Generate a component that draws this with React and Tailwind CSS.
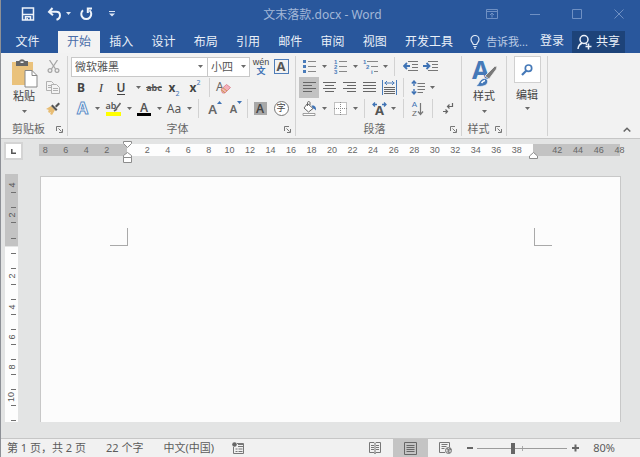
import { useState } from 'react';

const tabs = ['开始', '插入', '设计', '布局', '引用', '邮件', '审阅', '视图', '开发工具'];

function Caret() {
  return (
    <svg className="w-[5px] h-[3px] shrink-0" viewBox="0 0 5 3">
      <path d="M0 0h5L2.5 3z" fill="#6a6a6a" />
    </svg>
  );
}

function Tool({ label, className = 'w-5', children }) {
  return (
    <button aria-label={label} className={`h-full shrink-0 flex items-center justify-center hover:bg-[#d5d5d5] ${className}`}>
      {children}
    </button>
  );
}

function More({ label, className = 'w-2' }) {
  return (
    <Tool label={`${label}选项`} className={className}>
      <Caret />
    </Tool>
  );
}

function Divider({ className = 'mx-1' }) {
  return <div className={`w-px h-[19px] shrink-0 bg-[#d2d2d2] ${className}`}></div>;
}

function Row({ children }) {
  return <div className="h-[21px] flex items-center">{children}</div>;
}

function Group({ title, launcher = true, className = '', children }) {
  return (
    <section className={`shrink-0 flex flex-col border-r border-[#d2d2d2] ${className}`}>
      <div className="h-[66px]">{children}</div>
      <div className="h-[14px] flex items-center">
        <span className="flex-1 text-center text-[#666]">{title}</span>
        {launcher && title && (
          <button aria-label={`${title}设置`} className="mr-1 w-[7px]">
            <svg className="w-[7px] h-[7px]" viewBox="0 0 7 7" fill="none" stroke="#777">
              <path d="M.5 5V.5H5M2.5 2.5l3 3M6.5 3v3.5H3" />
            </svg>
          </button>
        )}
      </div>
    </section>
  );
}

// paragraph lines, each entry is [x, width]
function Lines({ rows }) {
  return (
    <svg className="w-[13px] h-[11px]" viewBox="0 0 13 11">
      {rows.map(([x, w], i) => (
        <rect key={i} x={x} y={i * 3} width={w} height="1" fill="#666" />
      ))}
    </svg>
  );
}

function TitleBar() {
  return (
    <header className="h-[31px] flex items-center px-4 pb-1">
      <div className="flex-1 flex items-center pl-1">
        <button aria-label="保存">
          <svg className="w-[14px] h-[14px]" viewBox="0 0 14 14" fill="none" stroke="#eef3fa" strokeWidth="1.5">
            <path d="M1.5 1h11v12h-11zM2 7.5h10" />
            <path d="M4.5 13V9.8h5V13" />
            <path d="M6.2 11v2" />
          </svg>
        </button>
        <button aria-label="撤消" className="ml-3">
          <svg className="w-[15px] h-[14px]" viewBox="0 0 15 14" fill="none" stroke="#eef3fa" strokeWidth="2">
            <path d="M5.5 1L2 4.8l4 3.4M2.5 4.8h6.7c5 0 5 6.5.3 8" />
          </svg>
        </button>
        <button aria-label="撤消列表" className="ml-1">
          <svg className="w-[5px] h-[3px]" viewBox="0 0 5 3">
            <path d="M0 0h5L2.5 3z" fill="#dbe5f3" />
          </svg>
        </button>
        <button aria-label="重复" className="ml-2">
          <svg className="w-[14px] h-[14px]" viewBox="0 0 14 14" fill="none" stroke="#eef3fa" strokeWidth="2">
            <path d="M4 3.2A5 5 0 1 0 10.5 3.2M13 1.5H8.8V6" />
          </svg>
        </button>
        <button aria-label="自定义快速访问工具栏" className="ml-4">
          <svg className="w-[6px] h-[7px]" viewBox="0 0 6 7" fill="#dbe5f3">
            <path d="M0 1h6v1H0zM0 3.5h6L3 6.5z" />
          </svg>
        </button>
      </div>
      <h1 className="self-end text-[12px] leading-6 text-[#a3b8d8]">文末落款.docx - Word</h1>
      <div className="flex-1 flex items-center justify-end gap-8 text-[#6f90c3]">
        <button aria-label="功能区显示选项">
          <svg className="w-3 h-[10px]" viewBox="0 0 12 10" fill="none" stroke="currentColor">
            <path d="M.5.5h11v9H.5zM.5 2.5h11M6 8.5V4M4 6l2-2 2 2" />
          </svg>
        </button>
        <button aria-label="最小化">
          <svg className="w-[10px] h-[10px]" viewBox="0 0 10 10" stroke="currentColor">
            <path d="M0 5.5h10" />
          </svg>
        </button>
        <button aria-label="最大化">
          <svg className="w-[10px] h-[10px]" viewBox="0 0 10 10" fill="none" stroke="currentColor">
            <path d="M.5.5h9v9h-9z" />
          </svg>
        </button>
        <button aria-label="关闭">
          <svg className="w-[10px] h-[10px]" viewBox="0 0 10 10" stroke="currentColor">
            <path d="M.5.5l9 9M9.5.5l-9 9" />
          </svg>
        </button>
      </div>
    </header>
  );
}

function TabBar() {
  const [active, setActive] = useState('开始');

  return (
    <nav className="h-[22px] flex text-[12px] leading-[20px] whitespace-nowrap text-[#eaf0f8]">
      <button className="w-[57px] shrink-0 pr-1">文件</button>
      <div className="flex-1 flex justify-between">
        {tabs.map((tab) => (
          <button
            key={tab}
            onClick={() => setActive(tab)}
            className={`px-[9px] ${active === tab ? 'bg-[#f3f3f3] text-[#4a6ea9]' : ''}`}
          >
            {tab}
          </button>
        ))}
      </div>
      <button className="shrink-0 ml-2 flex items-center gap-[6px] text-[11px] text-[#b9cae3]">
        <svg className="w-[10px] h-[14px]" viewBox="0 0 10 14" fill="none" stroke="#dfe8f4">
          <path d="M3.3 9.5C3.3 7.8 1 7 1 4.5a4 4 0 0 1 8 0C9 7 6.7 7.8 6.7 9.5zM3.3 11.5h3.4M4 13.2h2" strokeWidth="1.2" />
        </svg>
        告诉我...
      </button>
      <a href="#login" className="shrink-0 ml-3">登录</a>
      <button className="shrink-0 ml-2 mr-[15px] px-[5px] flex items-center gap-1 bg-[#1d4379]">
        <svg className="w-[15px] h-4" viewBox="0 0 15 16" fill="none" stroke="#eef3fa" strokeWidth="1.5">
          <circle cx="7" cy="5.5" r="4" />
          <path d="M1 15c.3-3.5 2-5 4.3-6M8.5 9.3l1.5 1.5M11.5 9.5v6M8.5 12.5h6" />
        </svg>
        共享
      </button>
    </nav>
  );
}

function ClipboardGroup() {
  return (
    <Group title="剪贴板" className="w-[67px]">
      <div className="flex">
        <button className="ml-[9px] w-[28px] flex flex-col items-center text-[#444]">
          <svg className="w-[27px] h-[29px] mt-[3px]" viewBox="0 0 27 29">
            <path d="M1 3h21v23H1z" fill="#eac27c" />
            <path d="M5 2h3a3.4 3.4 0 0 1 6 0h3v5H5z" fill="#666" />
            <path d="M9.5 2.5h3V4h-3z" fill="#f1f1f1" />
            <path d="M14 11.5h7l5 5V28H14z" fill="#fff" stroke="#888" />
            <path d="M21 11.5v5h5" fill="none" stroke="#888" />
          </svg>
          <span className="leading-[16px]">粘贴</span>
          <span className="mt-1 h-[7px] flex items-center"><Caret /></span>
        </button>
        <div className="ml-[5px] flex flex-col">
          <Row>
            <Tool label="剪切">
              <svg className="w-[13px] h-[13px]" viewBox="0 0 13 13" fill="none" stroke="#a6a6a6" strokeWidth="1.3">
                <path d="M2.5 0l6 9M10.5 0l-6 9" />
                <circle cx="3" cy="10.5" r="1.9" />
                <circle cx="10" cy="10.5" r="1.9" />
              </svg>
            </Tool>
          </Row>
          <Row>
            <Tool label="复制">
              <svg className="w-[14px] h-[13px]" viewBox="0 0 14 13" fill="#f3f3f3" stroke="#b0b0b0">
                <path d="M.5.5h5l2 2v7h-7zM2 4.5h4M2 6.5h4" />
                <path d="M5.5 3.5h5l3 3v6h-8zM7 7.5h5M7 9.5h5" />
              </svg>
            </Tool>
          </Row>
          <Row>
            <Tool label="格式刷">
              <svg className="w-[14px] h-[13px]" viewBox="0 0 14 13">
                <path d="M0 7l5-3 4 4-3 5-2-1 1-2-2 1-1-2 1-1z" fill="#e8bd74" />
                <path d="M5 4l1.5-1.5 5 5L10 9z" fill="#555" />
                <path d="M9 4l3.5-3.5L14 2l-3.5 3.5z" fill="#555" />
              </svg>
            </Tool>
          </Row>
        </div>
      </div>
    </Group>
  );
}

function FontGroup() {
  return (
    <Group title="字体" className="w-[228px] pl-[3px]">
      <Row>
        <label className="relative w-[137px] h-[20px] flex items-center">
          <select aria-label="字体" className="w-full h-full appearance-none bg-white border border-[#c8c8c8] pl-[3px] text-[#555]">
            <option>微软雅黑</option>
          </select>
          <span className="absolute right-[5px] top-[8px] flex"><Caret /></span>
        </label>
        <label className="relative -ml-px w-[43px] h-[20px] flex items-center">
          <select aria-label="字号" className="w-full h-full appearance-none bg-white border border-[#c8c8c8] pl-[3px] text-[#555]">
            <option>小四</option>
          </select>
          <span className="absolute right-1 top-[8px] flex"><Caret /></span>
        </label>
        <Tool label="拼音指南" className="w-[22px] flex-col font-['Liberation_Sans','Noto_Sans_CJK_SC',sans-serif] text-[9px]">
          <span className="leading-[8px] text-[#444]">wén</span>
          <span className="leading-[10px] font-bold text-[#3f73b5]">文</span>
        </Tool>
        <Tool label="字符边框" className="w-[18px]">
          <span className="w-[15px] h-[15px] border border-[#4f7db8] text-[13px] leading-[13px] font-bold text-[#555] text-center">A</span>
        </Tool>
      </Row>
      <Row>
        <Tool label="加粗"><span className="text-[12px] font-bold text-[#444]">B</span></Tool>
        <Tool label="倾斜"><span className="text-[13px] italic font-['Liberation_Serif',serif] text-[#444]">I</span></Tool>
        <Tool label="下划线"><span className="text-[12px] leading-[13px] font-semibold border-b border-[#444] text-[#444]">U</span></Tool>
        <More label="下划线" className="w-[14px]" />
        <Tool label="删除线" className="w-[18px]"><span className="text-[9px] font-bold line-through text-[#555]">abc</span></Tool>
        <Tool label="下标" className="w-[22px]">
          <span className="text-[12px] font-bold text-[#444]">x</span>
          <span className="self-end text-[7px] leading-[9px] text-[#3f73b5]">2</span>
        </Tool>
        <Tool label="上标" className="w-5">
          <span className="text-[12px] font-bold text-[#444]">x</span>
          <span className="self-start text-[7px] leading-[12px] text-[#3f73b5]">2</span>
        </Tool>
        <Divider />
        <Tool label="清除格式" className="w-[18px]">
          <span className="relative w-[14px] h-[14px] text-[12px] leading-[12px] text-left text-[#666]">
            A
            <svg className="absolute left-[4px] top-[3px] w-[11px] h-[10px]" viewBox="0 0 11 10">
              <path d="M1 5.5L6.5.5l4 3L5 9H2.5z" fill="#f4b0bb" stroke="#d77a86" strokeWidth=".8" />
              <path d="M1 5.5l4 3.3M3 3.8L7 7" stroke="#c9a24d" fill="none" />
            </svg>
          </span>
        </Tool>
      </Row>
      <Row>
        <Tool label="文本效果" className="w-[22px]">
          <svg className="w-[15px] h-[15px] overflow-visible" viewBox="0 0 15 15">
            <text x="7.5" y="13" textAnchor="middle" fontSize="16" fontWeight="700" fill="#fff" stroke="#5f8fc8">A</text>
          </svg>
        </Tool>
        <More label="文本效果" />
        <Tool label="突出显示" className="w-6 flex-col">
          <span className="relative w-[15px] h-[10px] text-left text-[9px] leading-[8px] font-semibold text-[#555]">
            ab
            <svg className="absolute right-0 top-0 w-[8px] h-[10px]" viewBox="0 0 8 10">
              <path d="M7.5 1L3 7M1 9l3-2" stroke="#666" strokeWidth="1.6" />
            </svg>
          </span>
          <span className="w-[15px] h-1 bg-[#ffff00]"></span>
        </Tool>
        <More label="突出显示" />
        <Tool label="字体颜色" className="w-[22px] flex-col">
          <span className="text-[12px] leading-[11px] font-semibold text-[#555]">A</span>
          <span className="w-[14px] h-[3px] bg-black"></span>
        </Tool>
        <More label="字体颜色" />
        <Tool label="更改大小写" className="w-[22px]"><span className="text-[12px] text-[#555]">Aa</span></Tool>
        <More label="更改大小写" />
        <Divider className="mx-[5px]" />
        <Tool label="增大字号" className="w-[22px]">
          <span className="text-[13px] font-semibold text-[#666]">A</span>
          <svg className="self-start mt-[3px] w-[5px] h-[3px]" viewBox="0 0 5 3"><path d="M0 3h5L2.5 0z" fill="#3f73b5" /></svg>
        </Tool>
        <Tool label="减小字号">
          <span className="text-[11px] font-semibold text-[#666]">A</span>
          <svg className="self-start mt-[3px] w-[5px] h-[3px]" viewBox="0 0 5 3"><path d="M0 0h5L2.5 3z" fill="#3f73b5" /></svg>
        </Tool>
        <Divider className="mx-px" />
        <Tool label="字符底纹" className="w-[22px]">
          <span className="w-[13px] h-[13px] bg-[#a8a8a8] text-[12px] leading-[13px] font-semibold text-[#444]">A</span>
        </Tool>
        <Tool label="带圈字符">
          <span className="w-[15px] h-[15px] rounded-full border border-[#777] bg-white text-[9px] leading-[12px] text-[#444]">字</span>
        </Tool>
      </Row>
    </Group>
  );
}

function ParagraphGroup() {
  return (
    <Group title="段落" className="w-[166px] pl-[3px]">
      <Row>
        <Tool label="项目符号">
          <svg className="w-[13px] h-[13px]" viewBox="0 0 13 13">
            <path d="M0 0h3v3H0zM0 5h3v3H0zM0 10h3v3H0z" fill="#4a7cba" />
            <path d="M5 1.5h8M5 6.5h8M5 11.5h8" stroke="#888" />
          </svg>
        </Tool>
        <More label="项目符号" className="w-[10px]" />
        <Tool label="编号" className="w-[22px]">
          <svg className="w-[13px] h-[15px] overflow-visible font-['Liberation_Sans',sans-serif]" viewBox="0 0 13 15">
            <g fontSize="6" fontWeight="700" fill="#4a7cba">
              <text x="0" y="5">1</text>
              <text x="0" y="10">2</text>
              <text x="0" y="15">3</text>
            </g>
            <path d="M5 2.5h8M5 7.5h8M5 12.5h8" stroke="#888" />
          </svg>
        </Tool>
        <More label="编号" />
        <Tool label="多级列表" className="w-[22px]">
          <svg className="w-[15px] h-[15px] overflow-visible font-['Liberation_Sans',sans-serif]" viewBox="0 0 15 15">
            <g fontSize="6" fontWeight="700" fill="#4a7cba">
              <text x="0" y="5">1</text>
              <text x="3" y="10">2</text>
              <text x="8" y="15">i</text>
            </g>
            <path d="M4 2.5h11M8 7.5h7M11 12.5h4" stroke="#888" />
          </svg>
        </Tool>
        <More label="多级列表" />
        <Divider className="mx-[5px]" />
        <Tool label="减少缩进量">
          <svg className="w-[15px] h-[11px]" viewBox="0 0 15 11">
            <path d="M5 .5h10M9 3.5h6M9 6.5h6M5 9.5h10" stroke="#777" />
            <path d="M7 5H2M4 2L1 5l3 3" fill="none" stroke="#3f73b5" strokeWidth="1.8" />
          </svg>
        </Tool>
        <Tool label="增加缩进量">
          <svg className="w-[15px] h-[11px]" viewBox="0 0 15 11">
            <path d="M5 .5h10M9 3.5h6M9 6.5h6M5 9.5h10" stroke="#777" />
            <path d="M0 5h6M3.5 2l3 3-3 3" fill="none" stroke="#3f73b5" strokeWidth="1.8" />
          </svg>
        </Tool>
      </Row>
      <Row>
        <Tool label="左对齐" className="w-5 bg-[#c2c2c2]"><Lines rows={[[0, 13], [0, 9], [0, 13], [0, 9]]} /></Tool>
        <Tool label="居中"><Lines rows={[[0, 13], [2, 9], [0, 13], [2, 9]]} /></Tool>
        <Tool label="右对齐"><Lines rows={[[0, 13], [4, 9], [0, 13], [4, 9]]} /></Tool>
        <Tool label="两端对齐"><Lines rows={[[0, 13], [0, 13], [0, 13], [0, 13]]} /></Tool>
        <Tool label="分散对齐">
          <svg className="w-[15px] h-[15px]" viewBox="0 0 15 15" fill="none">
            <path d="M.5 0v15M14.5 0v15M2.5 3h10M5 1L3 3l2 2M10 1l2 2-2 2" stroke="#4a7cba" />
            <path d="M2 7.5h11M2 9.5h11M2 11.5h11M2 13.5h11" stroke="#666" />
          </svg>
        </Tool>
        <Divider />
        <Tool label="行距">
          <svg className="w-[14px] h-[15px]" viewBox="0 0 14 15" fill="none">
            <path d="M3 1.5V6M.8 3.5L3 1l2.2 2.5M3 9v4.5M.8 11.5L3 14l2.2-2.5" stroke="#3f73b5" strokeWidth="1.4" />
            <path d="M6.5 3.5H14M6.5 6.5H14M6.5 9.5H14M6.5 12.5H12" stroke="#777" />
          </svg>
        </Tool>
        <More label="行距" />
      </Row>
      <Row>
        <Tool label="底纹">
          <svg className="w-[15px] h-[15px]" viewBox="0 0 15 15">
            <path d="M5.5 2.5l5.5 5L6.5 11 2 7z" fill="#fff" stroke="#666" />
            <path d="M5.5 5V1.5a1.3 1.3 0 0 1 2.5 0V4" fill="none" stroke="#666" />
            <path d="M9.5 4.5c3-.5 5 1.5 4.5 5-1-1-1.5-2-3-2z" fill="#3f73b5" />
            <path d="M1 12.5h12v2H1z" fill="#fff" stroke="#888" strokeWidth=".8" />
          </svg>
        </Tool>
        <More label="底纹" className="w-[10px]" />
        <Tool label="边框" className="w-[22px]">
          <svg className="w-[13px] h-[13px]" viewBox="0 0 13 13" fill="#fff" stroke="#8a8a8a" strokeDasharray="1 1">
            <path d="M.5.5h12v12H.5zM6.5 0v13M0 6.5h13" />
          </svg>
        </Tool>
        <More label="边框" />
        <Divider className="mx-[5px]" />
        <Tool label="中文版式" className="w-[19px]">
          <svg className="w-[15px] h-[13px] overflow-visible" viewBox="0 0 15 13" fill="none">
            <path d="M1 2.5h4M3 .5l-2 2 2 2M10 2.5h4M12 .5l2 2-2 2" stroke="#3f73b5" strokeWidth="1.3" />
            <text x="7.5" y="12.5" textAnchor="middle" fontSize="13" fontWeight="700" fill="#555">A</text>
          </svg>
        </Tool>
        <More label="中文版式" />
        <Divider className="ml-[6px] mr-1" />
        <Tool label="排序">
          <span className="flex flex-col font-['Liberation_Sans',sans-serif] text-[8px] leading-[9px]">
            <span className="text-[#3f73b5]">A</span>
            <span className="text-[#666]">Z</span>
          </span>
          <svg className="w-[7px] h-[14px]" viewBox="0 0 7 14" fill="none" stroke="#777" strokeWidth="1.2">
            <path d="M3.5 1v11M1 9.5l2.5 3 2.5-3" />
          </svg>
        </Tool>
        <Divider />
        <Tool label="显示编辑标记" className="w-[22px]">
          <svg className="w-[11px] h-[11px]" viewBox="0 0 11 11" fill="none" stroke="#666" strokeWidth="1.2">
            <path d="M9.5 0v3.5h-5M6.5 1.5l-2 2 2 2M0 8.5h4.5M2.5 6.5l2 2-2 2" />
          </svg>
        </Tool>
      </Row>
    </Group>
  );
}

function Ribbon() {
  return (
    <div className="flex pt-[3px] pb-[2px] bg-[#f2f2f2] border-b border-[#c6c6c6]">
      <ClipboardGroup />
      <FontGroup />
      <ParagraphGroup />
      <Group title="样式" className="w-[45px]">
        <button className="w-full flex flex-col items-center text-[#444]">
          <svg className="w-[26px] h-[29px] mt-[3px] overflow-visible" viewBox="0 0 26 29">
            <text x="1" y="20" fontSize="25" fontWeight="700" fill="#4579b8">A</text>
            <path d="M14 17l9.5-9.5L26 7l-.5 3L18 20z" fill="#7a7a7a" stroke="#f2f2f2" strokeWidth=".8" />
            <path d="M5 27c3-1 3-6.5 7.500-7.500 3-.5 5 1.500 4 4.500-1.500 3.500-8 4-11.500 3z" fill="#4579b8" stroke="#f2f2f2" strokeWidth=".8" />
            <path d="M10.5 24c1-1.500 2-2.200 3.500-2.500" fill="none" stroke="#fff" strokeWidth="1.6" />
          </svg>
          <span className="leading-[16px]">样式</span>
          <span className="mt-1 h-[7px] flex items-center"><Caret /></span>
        </button>
      </Group>
      <Group launcher={false} className="w-[41px]">
        <button className="w-full flex flex-col items-center text-[#444]">
          <span className="w-[27px] h-[27px] flex items-center justify-center bg-white border border-[#d0d0d0]">
            <svg className="w-3 h-3" viewBox="0 0 12 12" fill="none" stroke="#4579b8" strokeWidth="1.7">
              <circle cx="7.5" cy="4.2" r="3.2" />
              <path d="M5.2 6.7L1 11" strokeWidth="2.2" />
            </svg>
          </span>
          <span className="mt-1 leading-[16px]">编辑</span>
          <span className="mt-[2px] h-[7px] flex items-center"><Caret /></span>
        </button>
      </Group>
      <div className="flex-1 flex items-end justify-end pr-[9px] pb-1">
        <button aria-label="折叠功能区" className="flex">
          <svg className="w-2 h-[5px]" viewBox="0 0 8 5" fill="none" stroke="#666" strokeWidth="1.5">
            <path d="M.7 4.5L4 1.2l3.3 3.3" />
          </svg>
        </button>
      </div>
    </div>
  );
}

function Scale({ from, to, className }) {
  const marks = [];
  for (let n = from; n <= to; n += 2) marks.push(Math.abs(n));
  return (
    <div className={`flex text-[9px] leading-[12px] text-[#666] ${className}`}>
      {marks.map((n) => (
        <span key={n} className="flex-1 min-w-0 flex justify-center">{n}</span>
      ))}
    </div>
  );
}

function HorizontalRuler() {
  return (
    <div className="flex-1 flex h-3 font-['Liberation_Sans',sans-serif]">
      <div className="w-[88px] bg-[#c3c3c3]">
        <Scale from={-8} to={-2} className="-ml-1 mr-[10px]" />
      </div>
      <div className="relative flex-1 bg-[#fdfdfd]">
        <Scale from={2} to={38} className="ml-[10px] mr-[6px]" />
        <svg className="absolute -left-[4px] -top-[3px] w-[9px] h-[23px]" viewBox="0 0 9 23" fill="#fff" stroke="#8c8c8c">
          <path d="M.5.5h8v2l-4 4-4-4zM4.5 11.5l4 3v2h-8v-2zM.5 16.5h8v5h-8z" />
        </svg>
        <svg className="absolute -right-[5px] top-[8px] w-[9px] h-[7px]" viewBox="0 0 9 7" fill="#fff" stroke="#8c8c8c">
          <path d="M4.5.5l4 3.5v2.5h-8V4z" />
        </svg>
      </div>
      <div className="w-[87px] bg-[#c3c3c3]">
        <Scale from={42} to={48} className="ml-[14px] -mr-[10px]" />
      </div>
    </div>
  );
}

function Ticks({ items }) {
  return items.map((item, i) => (
    <div key={i} className="flex-1 min-h-0 flex items-center justify-center">
      {item === '-' && <span className="ml-[4px] w-[5px] h-px bg-[#707070]"></span>}
      {item !== '-' && item !== '' && <span className="-rotate-90 text-[9px] leading-[8px] text-[#555]">{item}</span>}
    </div>
  ));
}

function VerticalRuler() {
  const body = ['-', ''];
  for (let n = 2; n <= 10; n += 2) body.push('-', n, '-', '');
  body.push('-');

  return (
    <div className="w-[13px] flex flex-col font-['Liberation_Sans',sans-serif]">
      <div className="h-[72px] pt-[7px] pb-1 flex flex-col bg-[#c3c3c3]">
        <Ticks items={[4, '-', '', '-', 2, '-', '', '-']} />
      </div>
      <div className="flex-1 mt-px bg-[#fdfdfd] flex flex-col">
        <div className="flex-1 mt-[3px] -mb-[2px] flex flex-col">
          <Ticks items={body} />
        </div>
      </div>
    </div>
  );
}

function Workspace() {
  return (
    <main className="flex-1 flex flex-col bg-[#e3e4e4] pb-4">
      <div className="flex items-start pt-[3px] pl-[3px] pr-5">
        <button aria-label="制表符" className="w-[19px] h-[18px] border-2 border-[#d4d4d4] bg-white flex items-center justify-center">
          <svg className="w-[5px] h-[5px]" viewBox="0 0 5 5" fill="none" stroke="#555" strokeWidth="1.5">
            <path d="M.8 0v4.2H5" />
          </svg>
        </button>
        <div className="flex-1 flex pl-4 pt-[2px]">
          <HorizontalRuler />
        </div>
      </div>
      <div className="flex-1 flex mt-[14px] pl-1">
        <VerticalRuler />
        <article aria-label="文档" className="flex-1 mt-[2px] ml-[22px] mr-[19px] bg-[#fcfcfc] border border-b-0 border-[#c8c8c8] flex justify-between items-start pt-[51px] pl-[69px] pr-[68px]">
          <div className="w-[18px] h-[18px] border-r border-b border-[#a9a9a9]"></div>
          <div className="w-[18px] h-[18px] border-l border-b border-[#a9a9a9]"></div>
        </article>
      </div>
    </main>
  );
}

function StatusBar() {
  const [zoom, setZoom] = useState(39);

  return (
    <footer className="h-[19px] flex items-center bg-[#f1f1f1] border-t border-[#c6c6c6] pl-[6px] pr-[25px] text-[#5c5c5c]">
      <span>第 1 页，共 2 页</span>
      <span className="ml-5">22 个字</span>
      <span className="ml-5">中文(中国)</span>
      <button aria-label="宏录制" className="ml-[18px]">
        <svg className="w-3 h-3" viewBox="0 0 12 12" fill="none" stroke="#777">
          <path d="M5 1.5h6.5v10h-10V5M3.5 7h2M6.5 7h4M3.5 9.5h2M6.5 9.5h4M6 4.5h5M6 2.5h5" />
          <circle cx="2.5" cy="2.5" r="2.3" fill="#666" stroke="none" />
        </svg>
      </button>
      <div className="flex-1"></div>
      <button aria-label="阅读视图" className="mr-3">
        <svg className="w-3 h-3" viewBox="0 0 12 12" fill="none" stroke="#777">
          <path d="M6 1.5V12M.5.5H5l1 1 1-1h4.5v10H7l-1 1-1-1H.5zM2 3.5h3M2 5.5h3M2 7.5h3M7 3.5h3M7 5.5h3M7 7.5h3" />
        </svg>
      </button>
      <button aria-label="页面视图" className="w-[35px] h-full flex items-center justify-center bg-[#c4c4c4]">
        <svg className="w-[13px] h-[13px]" viewBox="0 0 13 13" fill="none" stroke="#666">
          <path d="M.5.5h12v12H.5zM2.5 3.5h8M2.5 5.5h8M2.5 7.5h8M2.5 9.5h8" />
        </svg>
      </button>
      <button aria-label="Web 版式视图" className="ml-[11px]">
        <svg className="w-[13px] h-3" viewBox="0 0 13 12" fill="none" stroke="#777">
          <path d="M6 10.5H.5V.5h10V5M2.5 2.5h6M2.5 4.5h5M2.5 6.5h3" />
          <circle cx="9.5" cy="8.5" r="3" fill="#ddd" />
          <path d="M8 6.5L10 8 9 9l1.5 2M10.5 6L12 8" strokeWidth="1.3" />
        </svg>
      </button>
      <button aria-label="缩小" className="ml-[15px]">
        <svg className="w-[6px] h-[8px]" viewBox="0 0 6 8" stroke="#666" strokeWidth="2"><path d="M0 4h6" /></svg>
      </button>
      <label className="relative ml-1 w-[90px] h-3 flex items-center">
        <span className="absolute left-[45px] top-1 w-px h-[5px] bg-[#aaa]"></span>
        <input
          type="range"
          aria-label="缩放"
          value={zoom}
          onChange={(e) => setZoom(Number(e.target.value))}
          className="relative w-full h-px appearance-none bg-[#9c9c9c] [&::-webkit-slider-thumb]:appearance-none [&::-webkit-slider-thumb]:w-[4px] [&::-webkit-slider-thumb]:h-[11px] [&::-webkit-slider-thumb]:bg-[#666]"
        />
      </label>
      <button aria-label="放大" className="ml-[5px]">
        <svg className="w-[7px] h-[8px]" viewBox="0 0 7 8" stroke="#666" strokeWidth="2"><path d="M0 4h7M3.5.5v7" /></svg>
      </button>
      <button className="ml-[14px]">80%</button>
    </footer>
  );
}

export default function App() {
  return (
    <div className="min-h-screen flex flex-col border-l border-[#8d9096] text-[11px] leading-[14px] font-['Noto_Sans','Noto_Sans_CJK_SC',sans-serif]">
      <div className="bg-[#29579c]">
        <TitleBar />
        <TabBar />
      </div>
      <Ribbon />
      <Workspace />
      <StatusBar />
    </div>
  );
}
